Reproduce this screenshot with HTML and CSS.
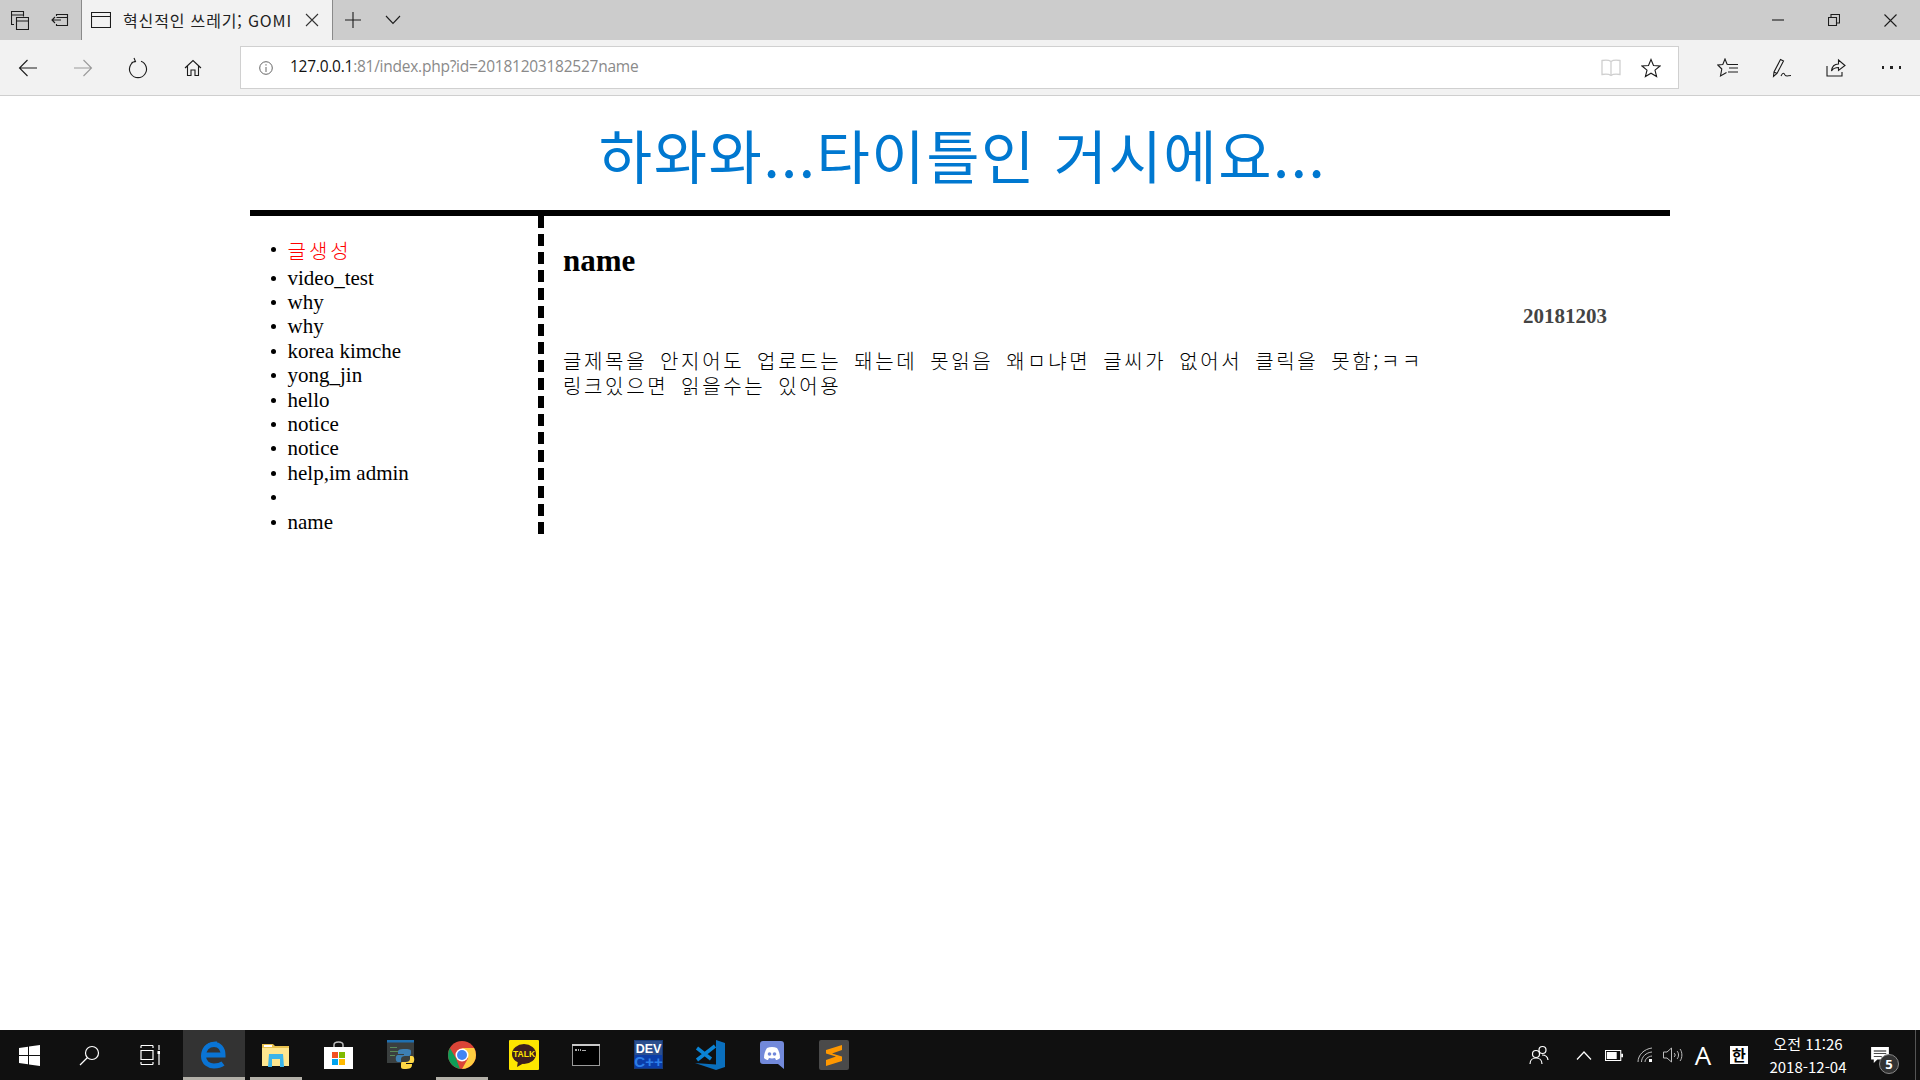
FILE: index.html
```html
<!DOCTYPE html>
<html lang="ko">
<head>
<meta charset="utf-8">
<title>혁신적인 쓰레기; GOMI</title>
<link rel="stylesheet" href="styles.css">
</head>
<body>
<div class="screen">
  <header class="browser">
    <div class="titlebar">
      <div class="cell w40"><svg width="18" height="19" viewBox="0 0 18 19" class="ic"><path d="M3 13.500H.500V.500H12.500V5.500M.500 4H12.500"/><path d="M5.500 6.500H17.500V18.500H5.500ZM5.500 10H17.500"/></svg></div>
      <div class="cell w40"><svg width="20" height="16" viewBox="0 0 20 16" class="ic"><path d="M6.500 4V2.500H17.500V13.500H6.500V12M6.500 5.500H17.500M11 8H2M5 5L2 8L5 11"/></svg></div>
      <div class="tab">
        <svg width="20" height="18" viewBox="0 0 20 18" class="ic"><path d="M.500 1.500H19.500V16.500H.500ZM.500 5.500H19.500"/></svg>
        <span class="tab-title">혁신적인 쓰레기; GOMI</span>
        <svg width="14" height="14" viewBox="0 0 14 14" class="ic tab-close"><path d="M1 1L13 13M13 1L1 13"/></svg>
      </div>
      <div class="cell w40"><svg width="18" height="18" viewBox="0 0 18 18" class="ic"><path d="M9 1V17M1 9H17"/></svg></div>
      <div class="cell w40"><svg width="16" height="10" viewBox="0 0 16 10" class="ic"><path d="M1 1L8 8.500L15 1"/></svg></div>
      <div class="winbtns">
        <div class="cell w56"><svg width="12" height="2" viewBox="0 0 12 2" class="ic"><path d="M0 1H12"/></svg></div>
        <div class="cell w56"><svg width="12" height="12" viewBox="0 0 12 12" class="ic"><path d="M.500 3.500H8.500V11.500H.500ZM3 3.500V.500H11.500V9H8.500"/></svg></div>
        <div class="cell w56"><svg width="13" height="13" viewBox="0 0 13 13" class="ic"><path d="M.500 .500L12.500 12.500M12.500 .500L.500 12.500"/></svg></div>
      </div>
    </div>
    <div class="toolbar">
      <div class="cell w55"><svg width="20" height="18" viewBox="0 0 20 18" class="ic"><path d="M19 9H1.500M9.500 1L1.500 9L9.500 17"/></svg></div>
      <div class="cell w55"><svg width="20" height="18" viewBox="0 0 20 18" class="ic dim"><path d="M1 9H18.500M10.500 1L18.500 9L10.500 17"/></svg></div>
      <div class="cell w55"><svg width="20" height="22" viewBox="0 0 20 22" class="ic"><path d="M7 4.200A8.500 8.500 0 1 0 13 4.200M6 1L7.500 4.500L3.500 5.500"/></svg></div>
      <div class="cell w55"><svg width="18" height="18" viewBox="0 0 18 18" class="ic"><path d="M1 9L9 1.500L17 9M3.500 7V16.500H7V11H11V16.500H14.500V7"/></svg></div>
      <div class="address">
        <svg width="14" height="14" viewBox="0 0 14 14" class="ic dim-info"><circle cx="7" cy="7" r="6.300"/><path d="M7 6V11M7 3.200V4.600"/></svg>
        <span class="url"><span class="host">127.0.0.1</span>:81/index.php?id=20181203182527name</span>
        <svg width="20" height="18" viewBox="0 0 20 18" class="ic faint"><path d="M10 2.500C8 1 4 1 1 1.500V15.500C4 15 8 15 10 16.500C12 15 16 15 19 15.500V1.500C16 1 12 1 10 2.500V16.500"/></svg>
        <svg width="20" height="20" viewBox="0 0 20 20" class="ic addr-star"><path d="M10 1.500L12.500 7.500L19 8L14 12.200L15.600 18.500L10 15.200L4.400 18.500L6 12.200L1 8L7.500 7.500Z"/></svg>
      </div>
      <div class="tools">
        <div class="cell w54"><svg width="22" height="20" viewBox="0 0 22 20" class="ic"><path d="M10.200 6.500L8 1L5.800 6.500L.800 7L4.800 11L3.500 18L9.500 14.500M10.200 6.500H21M12 10H21M11 14H21"/></svg></div>
        <div class="cell w54"><svg width="20" height="20" viewBox="0 0 20 20" class="ic"><path d="M1.500 18.500L2 14L8.500 1.500L11.500 3L5 15.500ZM2 14L5 15.500M9 18C11 14 12 15 13 17C14.500 19 16 17.500 19 17.500"/></svg></div>
        <div class="cell w54"><svg width="20" height="19" viewBox="0 0 20 19" class="ic"><path d="M1 8V18H16V14M5.500 13C6 8 9 6 12.500 6V2L19 7.500L12.500 12.500V9.500C10 9.500 7 10.500 5.500 13Z"/></svg></div>
        <div class="cell w54"><div class="dots"><i></i><i></i><i></i></div></div>
      </div>
    </div>
  </header>

  <main class="page">
    <div class="wrap">
      <h1 class="site-title">하와와...타이틀인 거시에요...</h1>
      <div class="columns">
        <nav class="side">
          <ul class="post-list">
            <li class="post current">글생성</li>
            <li class="post">video_test</li>
            <li class="post">why</li>
            <li class="post">why</li>
            <li class="post">korea kimche</li>
            <li class="post">yong_jin</li>
            <li class="post">hello</li>
            <li class="post">notice</li>
            <li class="post">notice</li>
            <li class="post">help,im admin</li>
            <li class="post"></li>
            <li class="post">name</li>
          </ul>
        </nav>
        <article class="content">
          <h2 class="post-title">name</h2>
          <div class="post-date">20181203</div>
          <p class="post-body">글제목을 안지어도 업로드는 돼는데 못읽음 왜ㅁ냐면 글씨가 없어서 클릭을 못함;ㅋㅋ<br>링크있으면 읽을수는 있어용</p>
        </article>
      </div>
    </div>
  </main>

  <footer class="taskbar">
    <div class="tb-start">
      <div class="tb-cell tb-win"><svg width="21" height="21" viewBox="0 0 21 21"><path class="white" d="M0 3L9 1.700V10H0ZM10 1.500L21 0V10H10ZM0 11H9V19.300L0 18ZM10 11H21V21L10 19.500Z"/></svg></div>
      <div class="tb-cell tb-search"><svg width="21" height="21" viewBox="0 0 21 21" class="wline"><circle cx="13" cy="8" r="6.500"/><path d="M8.500 12.500L1 20"/></svg></div>
      <div class="tb-cell tb-task"><svg width="20" height="20" viewBox="0 0 20 20" class="wline"><path d="M1 .500H13M1 19.500H13M1 .500V3M13 .500V3M1 17V19.500M13 17V19.500M1 5.500H13V14.500H1ZM19 0V5M19 9V20"/><path class="white" d="M17.500 6H20V9H17.500Z"/></svg></div>
    </div>
    <div class="tb-apps">
      <div class="tb-app active"><svg width="26" height="28" viewBox="0 0 26 28"><path class="edge" d="M4 14H22C22 7 18 3.500 13 3.500C7 3.500 2.500 8 2.500 15C2.500 22 8 25 13 25C17 25 20 24 22 22.500" stroke-width="5"/><path class="edge" d="M3 10C5 4 11 1.500 16 2" stroke-width="3"/></svg></div>
      <div class="tb-app running"><svg width="28" height="24" viewBox="0 0 28 24"><path fill="#e8c14e" d="M0 1H11L13 3H27V23H0Z"/><path fill="#fde68f" d="M0 5H27V23H0Z"/><path fill="#fff" d="M2 2H10V4H2Z"/><path fill="#3ab4ea" d="M7 11H21L22 24H18V16H10V24H6Z"/></svg></div>
      <div class="tb-app"><svg width="29" height="29" viewBox="0 0 29 29"><path fill="none" stroke="#bbb" stroke-width="1.500" d="M10 9V5C10 1 19 1 19 5V9"/><path fill="#fff" d="M0 7H29V29H0Z"/><path fill="#f25022" d="M8 12H14V18H8Z"/><path fill="#7fba00" d="M15 12H21V18H15Z"/><path fill="#00a4ef" d="M8 19H14V25H8Z"/><path fill="#ffb900" d="M15 19H21V25H15Z"/></svg></div>
      <div class="tb-app"><svg width="30" height="30" viewBox="-2 0 30 30"><path fill="#3a3f3f" d="M0 0H27V23H0Z"/><path fill="#1f6fb0" d="M0 0H27V2.500H0Z"/><path fill="#5a8a5a" d="M3 7H10V8H3ZM3 11H14V12H3ZM3 15H8V16H3Z"/><path fill="#3d7fb4" d="M16 9C10 9 11 12 11 14H17V15H11C8 15 8 22 11 22H14V19C14 17 16 16 18 16H22C23 16 24 15 24 13V11C24 9 20 9 16 9Z"/><path fill="#ffd845" d="M19 29C25 29 25 26 25 24H19V23H25C28 23 28 16 25 16H23V19C23 21 21 22 19 22H15C14 22 14 23 14 25V27C14 29 16 29 19 29Z"/></svg></div>
      <div class="tb-app running"><svg width="28" height="28" viewBox="0 0 28 28"><circle cx="14" cy="14" r="14" fill="#db4437"/><path fill="#0f9d58" d="M14 28A14 14 0 0 1 1.900 7L8 17.500L12 28Z"/><path fill="#ffcd40" d="M14 28A14 14 0 0 0 26.100 7H14L20 17.500Z"/><circle cx="14" cy="14" r="6.500" fill="#fff"/><circle cx="14" cy="14" r="5" fill="#4285f4"/></svg></div>
      <div class="tb-app"><svg width="30" height="30" viewBox="0 0 30 30"><rect width="30" height="30" rx="1" fill="#fee500"/><ellipse cx="15" cy="14" rx="12" ry="10" fill="#3c1e1e"/><path fill="#3c1e1e" d="M9 21L8 27L15 23Z"/><text x="15" y="17" class="talk">TALK</text></svg></div>
      <div class="tb-app"><svg width="28" height="22" viewBox="0 0 28 22"><rect x=".500" y=".500" width="27" height="21" fill="#000" stroke="#9a9a9a"/><path fill="#c9c9c9" d="M0 0H28V2H0Z"/><path fill="#aaa" d="M3 5H5V7H3ZM6 5H7V7H6ZM8 5H9V7H8ZM10 6H14V7H10Z"/></svg></div>
      <div class="tb-app"><svg width="29" height="29" viewBox="0 0 29 29"><rect width="29" height="29" fill="#173a78"/><rect x="1" y="1" width="27" height="14" fill="#2c4f8e"/><rect x="1" y="15" width="27" height="13" fill="#0b3da8"/><text x="14.500" y="12.500" class="dev">DEV</text><text x="14.500" y="27" class="cpp">C++</text></svg></div>
      <div class="tb-app"><svg width="30" height="30" viewBox="0 0 30 30"><path fill="#0a6fbd" d="M21 0L30 3V27L21 30ZM0 23L21 24.500V30Z"/><path fill="none" stroke="#0a84d6" stroke-width="3.500" d="M2 8L16 19M2 20L20 6"/></svg></div>
      <div class="tb-app"><svg width="25" height="28" viewBox="0 0 25 28"><path fill="#7289da" d="M3 0H21A3 3 0 0 1 24 3V28L18 23H3A3 3 0 0 1 0 20V3A3 3 0 0 1 3 0Z"/><path fill="#fff" d="M7 7C10 5.500 14 5.500 17 7C19 10 20 13 20 17C18.500 18.500 17 19 16 19L15 17C13 17.500 11 17.500 9 17L8 19C7 19 5.500 18.500 4 17C4 13 5 10 7 7Z"/><circle cx="9.500" cy="13" r="1.800" fill="#7289da"/><circle cx="14.500" cy="13" r="1.800" fill="#7289da"/></svg></div>
      <div class="tb-app"><svg width="30" height="30" viewBox="0 0 30 30"><rect width="30" height="30" rx="2" fill="#4a4a4a"/><path fill="#ff9800" d="M7 10L23 5V10L13 13.500L23 16.500V21L7 26V20L17 16.500L7 13.500Z"/></svg></div>
    </div>
    <div class="tray">
      <div class="tr-cell w38"><svg width="20" height="20" viewBox="0 0 20 20" class="wline"><circle cx="7" cy="9" r="3.500"/><path d="M1 19C1 15 4 13 7 13C10 13 13 15 13 19"/><circle cx="13.500" cy="5" r="3.500"/><path d="M13 10C15.500 10 18.500 11 19 15"/></svg></div>
      <div class="tr-cell w28 gap12"><svg width="16" height="9" viewBox="0 0 16 9" class="wline"><path d="M1 8.500L8 1L15 8.500"/></svg></div>
      <div class="tr-cell w32"><svg width="18" height="11" viewBox="0 0 20 12" class="wline"><path d="M.500 .500H17.500V11.500H.500Z"/><path class="white" d="M2 2H13V10H2ZM18 4H20V8H18Z"/></svg></div>
      <div class="tr-cell w30"><svg width="16" height="16" viewBox="0 0 16 16" class="wline thin"><path d="M1 15C1 8 7 2 15 1M4.500 15C4.500 10 9 5.500 15 5M8 15C8 12 11 9.500 15 9"/><path class="white" d="M12 12H15V15H12Z"/></svg></div>
      <div class="tr-cell w26"><svg width="20" height="16" viewBox="0 0 20 16" class="wline thin"><path d="M.500 5H4L8.500 1V15L4 11H.500ZM11 6C12.500 7 12.500 9 11 10M14 4C16 6 16 10 14 12M17 2C19.500 5 19.500 11 17 14"/></svg></div>
      <div class="tr-cell w34 tr-a">A</div>
      <div class="tr-cell w38"><span class="ime">한</span></div>
      <div class="tr-cell w100 clock"><span>오전 11:26</span><span>2018-12-04</span></div>
      <div class="tr-cell w44 notif">
        <svg width="20" height="16" viewBox="0 0 20 18"><path class="white" d="M0 0H20V14H7L3 18V14H0Z"/><path fill="#101010" d="M3 4H17V5H3ZM3 7H17V8H3ZM3 10H12V11H3Z"/></svg>
        <span class="badge">5</span>
      </div>
    </div>
    <div class="show-desktop"></div>
  </footer>
</div>
</body>
</html>
```

FILE: styles.css
```css
* { box-sizing: border-box; }
html, body { margin: 0; padding: 0; background: #fff; }
.screen { width: 1920px; height: 1080px; display: flex; flex-direction: column; overflow: hidden; }

/* browser chrome */
.browser { flex: none; height: 96px; font-family: "Open Sans", "Noto Sans CJK KR", sans-serif; }
.ic { fill: none; stroke: #1c1c1c; stroke-width: 1.100; display: block; flex: none; }
.ic.dim { stroke: #9a9a9a; }
.ic.dim-info { stroke: #555; stroke-width: .900; }
.ic.faint { stroke: #cfcfcf; stroke-width: 1.300; }
.cell { display: flex; align-items: center; justify-content: center; flex: none; height: 100%; }
.w40 { width: 40px; }
.w54 { width: 54px; }
.w55 { width: 55px; }
.w56 { width: 56px; }

.titlebar { height: 40px; background: #cccccc; display: flex; align-items: stretch; }
.tab { width: 252px; margin-left: 1px; background: #f2f2f2; border-right: 1px solid #8a8a8a; border-left: 1px solid #8a8a8a; display: flex; align-items: center; padding: 0 13px 0 9px; }
.tab-title { font-family: "Noto Sans CJK KR", sans-serif; font-size: 16px; letter-spacing: .850px; color: #222; margin-left: 12px; white-space: nowrap; flex: 1; }
.tab-close { stroke: #333; }
.winbtns { margin-left: auto; display: flex; padding-right: 2px; }

.toolbar { height: 56px; background: #f2f2f2; border-bottom: 1px solid #cfcfcf; display: flex; align-items: stretch; }
.address { width: 1439px; height: 43px; margin: 6px 0 0 20px; background: #fff; border: 1px solid #d0d0d0; display: flex; align-items: center; padding-left: 18px; }
.url { font-size: 15.500px; letter-spacing: -.250px; color: #8a8a8a; margin: 0 0 4px 17px; flex: 1; white-space: nowrap; }
.host { color: #111; }
.addr-star { margin-left: 20px; margin-right: 17px; }
.tools { display: flex; margin-left: 22px; }
.dots { display: flex; gap: 6px; margin-left: 3px; }
.dots i { width: 2.500px; height: 2.500px; background: #222; display: block; }

/* page */
.page { flex: 1; min-height: 0; font-family: "Liberation Serif", "Noto Sans CJK KR", serif; font-size: 21px; color: #000; }
.wrap { width: 1420px; margin: 0 auto; }
.site-title { height: 114px; margin: 0; padding: 18px 0 0 5px; text-align: center; font-family: "Noto Sans CJK KR", sans-serif; font-size: 58px; font-weight: 400; line-height: 80px; letter-spacing: 1.500px; color: #0078d0; }
.columns { display: flex; border-top: 6px solid #000; }
.side { width: 294px; height: 318px; border-right: 6px dashed #000; flex: none; }
.post-list { margin: 21px 0 0; padding: 0 0 0 37.500px; list-style: none; }
.post { position: relative; min-height: 24.400px; line-height: 24.400px; }
.post::before { content: ""; position: absolute; left: -17px; top: 10px; width: 5px; height: 5px; border-radius: 50%; background: #000; }
.post.current { min-height: 28.500px; line-height: 28.500px; color: #ff0000; font-family: "Noto Sans CJK KR", sans-serif; font-size: 20px; font-weight: 300; letter-spacing: 3px; }
.content { flex: 1; padding-left: 19px; }
.post-title { margin: 27px 0 0; font-size: 31px; line-height: 36px; font-weight: 700; }
.post-date { margin-top: 25px; padding-right: 63px; text-align: right; font-weight: 700; color: #444; line-height: 24px; }
.post-body { margin: 21px 0 0; font-family: "Noto Sans CJK KR", sans-serif; font-size: 20px; font-weight: 300; line-height: 24.500px; letter-spacing: 2.650px; word-spacing: 4.600px; }

/* taskbar */
.taskbar { flex: none; height: 50px; background: #101010; display: flex; align-items: stretch; position: relative; font-family: "Noto Sans CJK KR", sans-serif; color: #fff; }
.white { fill: #fff; stroke: none; }
.wline { fill: none; stroke: #fff; stroke-width: 1.200; display: block; }
.wline.thin { stroke: #bdbdbd; stroke-width: 1; }
.tb-start { display: flex; width: 183px; flex: none; }
.tb-cell { display: flex; align-items: center; justify-content: center; }
.tb-win { width: 59px; }
.tb-search { width: 60px; }
.tb-task { width: 62px; }
.tb-apps { display: flex; }
.tb-app { width: 62px; display: flex; align-items: center; justify-content: center; position: relative; padding-bottom: 1px; }
.tb-app.active { background: #333; }
.tb-app.active::after, .tb-app.running::after { content: ""; position: absolute; bottom: 0; height: 3px; background: #b3b0a8; }
.tb-app.active::after { left: 0; right: 0; }
.tb-app.running::after { left: 5px; right: 5px; }
.edge { fill: none; stroke: #0a74d4; }
.talk { font-family: "Liberation Sans", sans-serif; font-size: 8.500px; font-weight: 700; fill: #fee500; text-anchor: middle; }
.dev { font-family: "Liberation Sans", sans-serif; font-size: 12.500px; font-weight: 700; fill: #fff; text-anchor: middle; }
.cpp { font-family: "Liberation Sans", sans-serif; font-size: 15px; font-weight: 700; fill: #2d7fe8; text-anchor: middle; }

.tray { margin-left: auto; width: 382px; flex: none; display: flex; align-items: stretch; margin-right: 18px; }
.tr-cell { display: flex; align-items: center; justify-content: center; flex: none; }
.w26 { width: 26px; }
.w28 { width: 28px; }
.w30 { width: 30px; }
.w32 { width: 32px; }
.w34 { width: 34px; }
.w38 { width: 38px; }
.w44 { width: 44px; }
.w100 { width: 100px; }
.gap12 { margin-left: 12px; }
.tr-a { font-family: "Open Sans", sans-serif; font-size: 26px; }
.ime { display: block; width: 18px; height: 18px; background: #fff; color: #000; font-size: 15px; line-height: 18px; text-align: center; font-weight: 700; }
.clock { flex-direction: column; font-size: 15px; line-height: 23px; white-space: nowrap; }
.notif { position: relative; }
.badge { position: absolute; left: 21px; top: 24px; width: 20px; height: 20px; border-radius: 50%; background: #333; border: 1px solid #888; font-family: "Open Sans", sans-serif; font-size: 13px; font-weight: 700; line-height: 18px; text-align: center; }
.show-desktop { position: absolute; right: 4px; top: 0; bottom: 0; width: 1px; background: #555; }
```
